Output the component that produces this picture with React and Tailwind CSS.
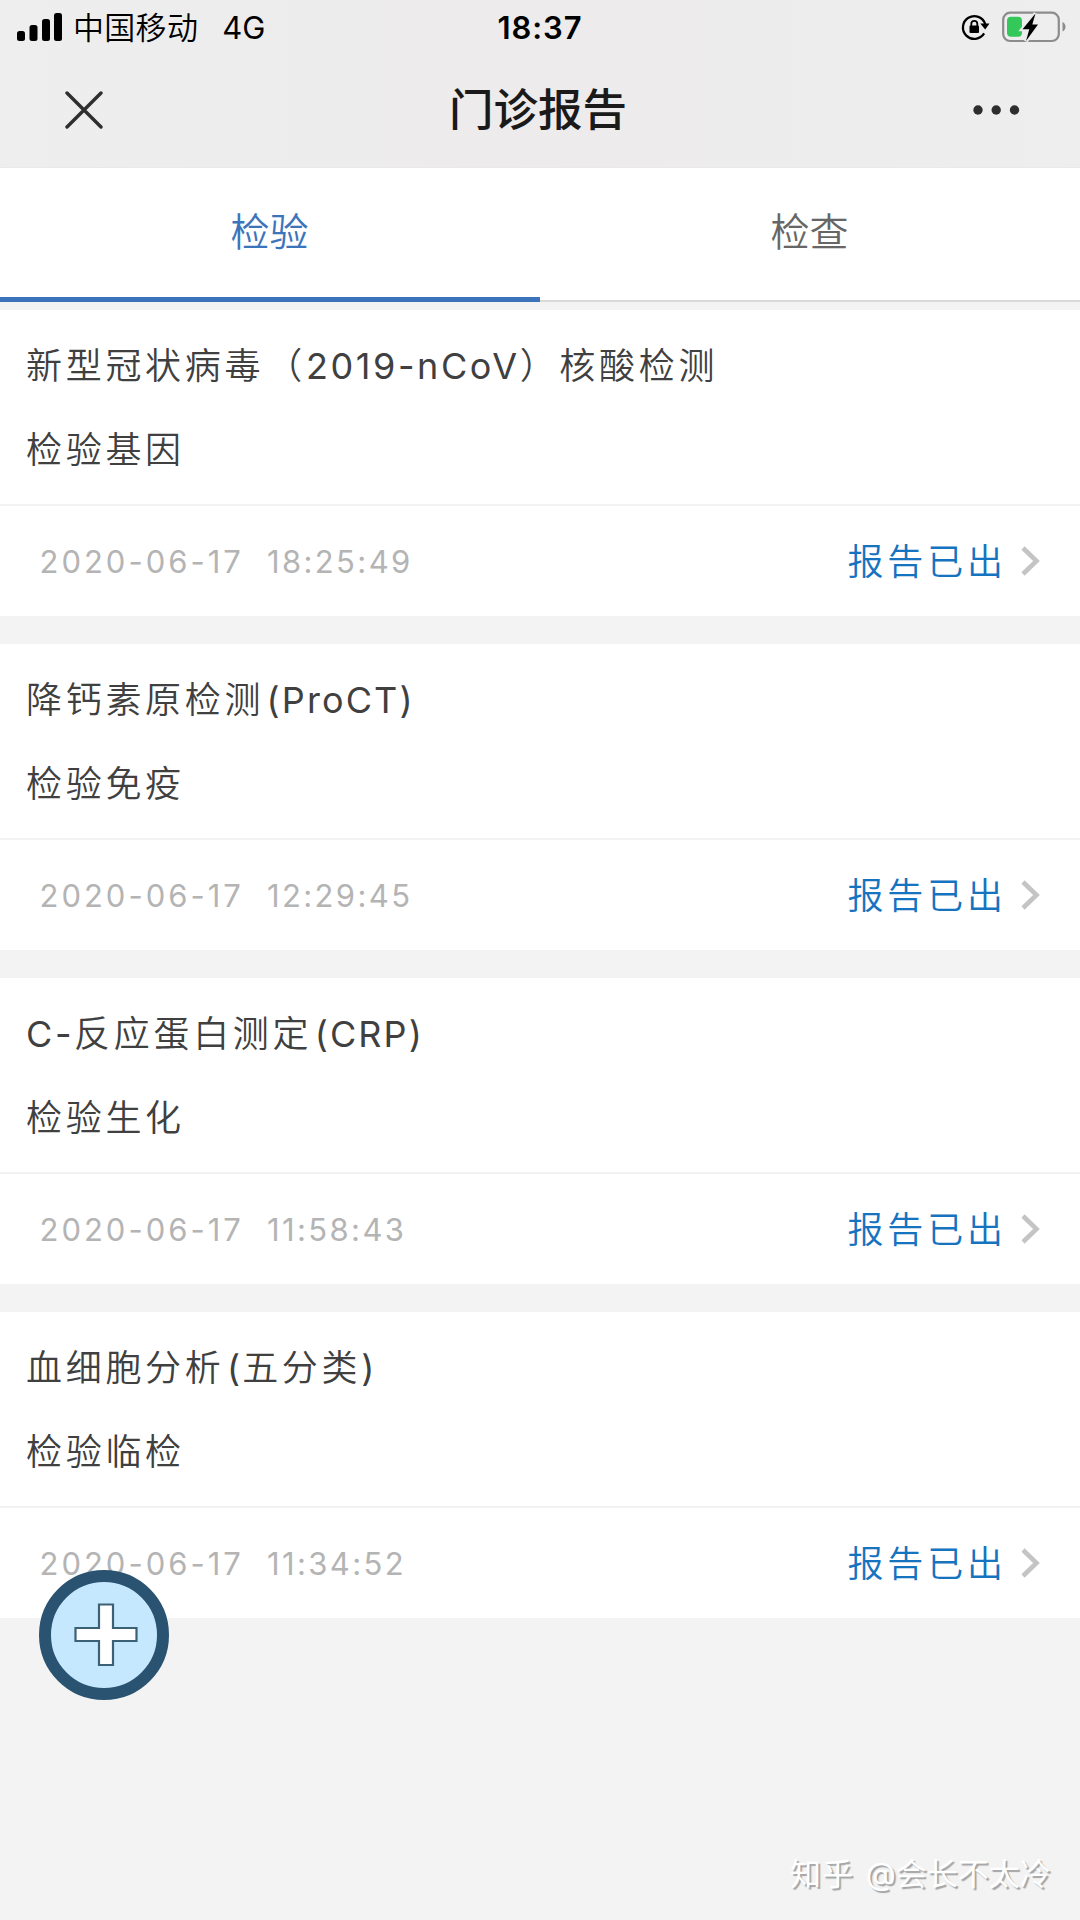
import React, { useState } from 'react'

const reports = [
    { id: 1, title: '新型冠状病毒（2019-nCoV）核酸检测', type: '检验基因', date: '2020-06-17', time: '18:25:49' },
    { id: 2, title: '降钙素原检测(ProCT)', type: '检验免疫', date: '2020-06-17', time: '12:29:45' },
    { id: 3, title: 'C-反应蛋白测定(CRP)', type: '检验生化', date: '2020-06-17', time: '11:58:43' },
    { id: 4, title: '血细胞分析(五分类)', type: '检验临检', date: '2020-06-17', time: '11:34:52' },
]

export default function App() {
    const [tab, setTab] = useState(0);
    //0  => 检验
    //1  => 检查

    return (
        <div className="relative flex h-[1920px] w-[1080px] flex-col overflow-hidden bg-[#f3f3f3] font-['Inter','Noto_Sans_CJK_SC',sans-serif]">
            <header className="h-[168px] border-b border-[#e9e9e9] bg-linear-to-r from-[#eeeeef] via-[#edebeb] to-[#eeeeee]">
                <StatusBar />
                <NavBar />
            </header>
            <Tabs tab={tab} setTab={setTab} />
            <main className="flex flex-col gap-7 pt-2">
                {reports.map((item) => <ReportCard key={item.id} data={item} />)}
            </main>
            <AddButton />
            <div className="absolute top-[1851px] left-[790px] text-[31px] leading-[46px] whitespace-nowrap text-white [text-shadow:2px_2px_1px_#a4a4a4] [word-spacing:3px]">
                <span className="tracking-[1px]">知乎</span> @会长不太冷
            </div>
        </div>
    )
}

const StatusBar = () => {
    return (
        <div className="grid h-[54px] grid-cols-3 items-center pr-[14px] pl-[17px] text-[31px] leading-none text-black">
            <div className="flex items-center">
                <svg className="mr-[11px] h-7 w-[45px]" viewBox="0 0 45 28">
                    <rect x="0" y="18" width="8" height="10" rx="2.5" />
                    <rect x="12.5" y="12" width="8" height="16" rx="2.5" />
                    <rect x="25" y="6" width="8" height="22" rx="2.5" />
                    <rect x="37" y="0" width="8" height="28" rx="2.5" />
                </svg>
                <span className="font-[350] tracking-[0.3px]">中国移动</span>
                <span className="ml-6">4G</span>
            </div>
            <div className="pr-[3px] text-center font-semibold tracking-[0.9px]">18:37</div>
            <div className="flex items-center justify-end gap-3">
                <svg className="h-[30px] w-[30px]" viewBox="0 0 30 30">
                    <path d="M24.1 21.4A11.4 11.4 0 1 1 25.2 12" fill="none" stroke="black" strokeWidth="2.3" />
                    <path d="M20.3 11.5H29.5L25.2 17.5Z" />
                    <rect x="9.5" y="13.5" width="9.5" height="7.5" rx="1" />
                    <path d="M11.3 14V11.8a3 3 0 0 1 6 0V14" fill="none" stroke="black" strokeWidth="1.8" />
                </svg>
                <svg className="h-8 w-[64px]" viewBox="0 0 64 32">
                    <rect x="1.2" y="1.7" width="55.6" height="28.3" rx="7" fill="none" stroke="#8c8c8c" strokeWidth="2.2" />
                    <path d="M60.5 11q3 1.5 3 4.8t-3 4.8z" fill="#8c8c8c" />
                    <rect x="5" y="5.8" width="15" height="20" rx="4" fill="#34c759" />
                    <path d="M33.5 2.5L20.5 18.3H27.3L24 30L36 13.5H30.3Z" fill="black" stroke="#ececec" strokeWidth="4" paintOrder="stroke" />
                </svg>
            </div>
        </div>
    )
}

const NavBar = () => {
    return (
        <div className="flex h-[110px] items-center justify-between pt-px pr-[60px] pl-[65px]">
            <svg className="h-[38px] w-[38px]" viewBox="0 0 38 38">
                <path d="M2 2L36 36M36 2L2 36" stroke="#2e2e2e" strokeWidth="3.4" strokeLinecap="round" />
            </svg>
            <h1 className="pt-px text-[44.5px] leading-none font-medium text-[#1a1a1a]">门诊报告</h1>
            <svg className="h-[10px] w-[47px]" viewBox="0 0 47 10" fill="#2e2e2e">
                <circle cx="5" cy="5" r="4.7" />
                <circle cx="23.2" cy="5" r="4.7" />
                <circle cx="41.5" cy="5" r="4.7" />
            </svg>
        </div>
    )
}

const Tabs = ({ tab, setTab }) => {
    return (
        <nav className="grid h-[134px] grid-cols-2 bg-white text-[39px] font-[350]">
            {['检验', '检查'].map((name, index) => {
                return (
                    <div
                        key={name}
                        onClick={() => setTab(index)}
                        className={`flex cursor-pointer items-start justify-center pt-[34px] pr-px leading-[60px] ${
                            tab === index ? 'border-b-[5px] border-[#3c74bb] text-[#3c74bb]' : 'border-b-2 border-[#d9d9d9] text-[#666666]'
                        }`}
                    >
                        {name}
                    </div>
                )
            })}
        </nav>
    )
}

// latin runs and brackets are spaced differently from the chinese text around them
const MixedText = ({ text }) => {
    return text.split(/([\x20-\x7e]+|（)/).filter(Boolean).map((part, index) => {
        if (part === '（') {
            return <span key={index} className="ml-0.5">{part}</span>
        }
        if (part[0] === '(') {
            return <span key={index} className="ml-[2.4px] font-normal tracking-[2.1px]">{part}</span>
        }
        if (/^[\x20-\x7e]/.test(part)) {
            return <span key={index} className="font-normal tracking-[2.6px]">{part}</span>
        }
        return <span key={index}>{part}</span>
    })
}

const ReportCard = ({ data }) => {
    return (
        <section className="h-[306px] bg-white">
            <div className="flex h-[196px] flex-col gap-[30px] border-b-2 border-[#f2f2f2] pt-[29px] pl-[26px] text-[36px] leading-[54px] font-[350] tracking-[3.7px] text-[#404040]">
                <h2><MixedText text={data.title} /></h2>
                <p>{data.type}</p>
            </div>
            <div className="flex h-[110px] items-center justify-between pr-10 pl-[39.5px]">
                <div className="flex gap-[23px] pt-[3px] text-[31px] text-[#b4b4b4]">
                    <span className="tracking-[3px]">{data.date}</span>
                    <span className="tracking-[2.4px]">{data.time}</span>
                </div>
                <div className="flex items-center gap-[14px] text-[36px] leading-none font-[350] tracking-[3.9px] text-[#1673bf]">
                    <span className="pt-0.5">报告已出</span>
                    <svg className="h-[30px] w-[19px]" viewBox="0 0 19 30">
                        <path d="M2 2L15.5 15L2 28" fill="none" stroke="#c4c4c4" strokeWidth="4.6" />
                    </svg>
                </div>
            </div>
        </section>
    )
}

const AddButton = () => {
    return (
        <button className="absolute top-[1570px] left-[39px] flex h-[130px] w-[130px] cursor-pointer items-center justify-center rounded-full border-12 border-[#2a5371] bg-[#c6e8ff]">
            <svg className="ml-[3px] h-16 w-16" viewBox="0 0 64 64">
                <path d="M25 1.5H39V25H62.5V38H39V62H25V38H1.5V25H25Z" fill="white" stroke="#3a6175" strokeWidth="2.2" />
            </svg>
        </button>
    )
}
